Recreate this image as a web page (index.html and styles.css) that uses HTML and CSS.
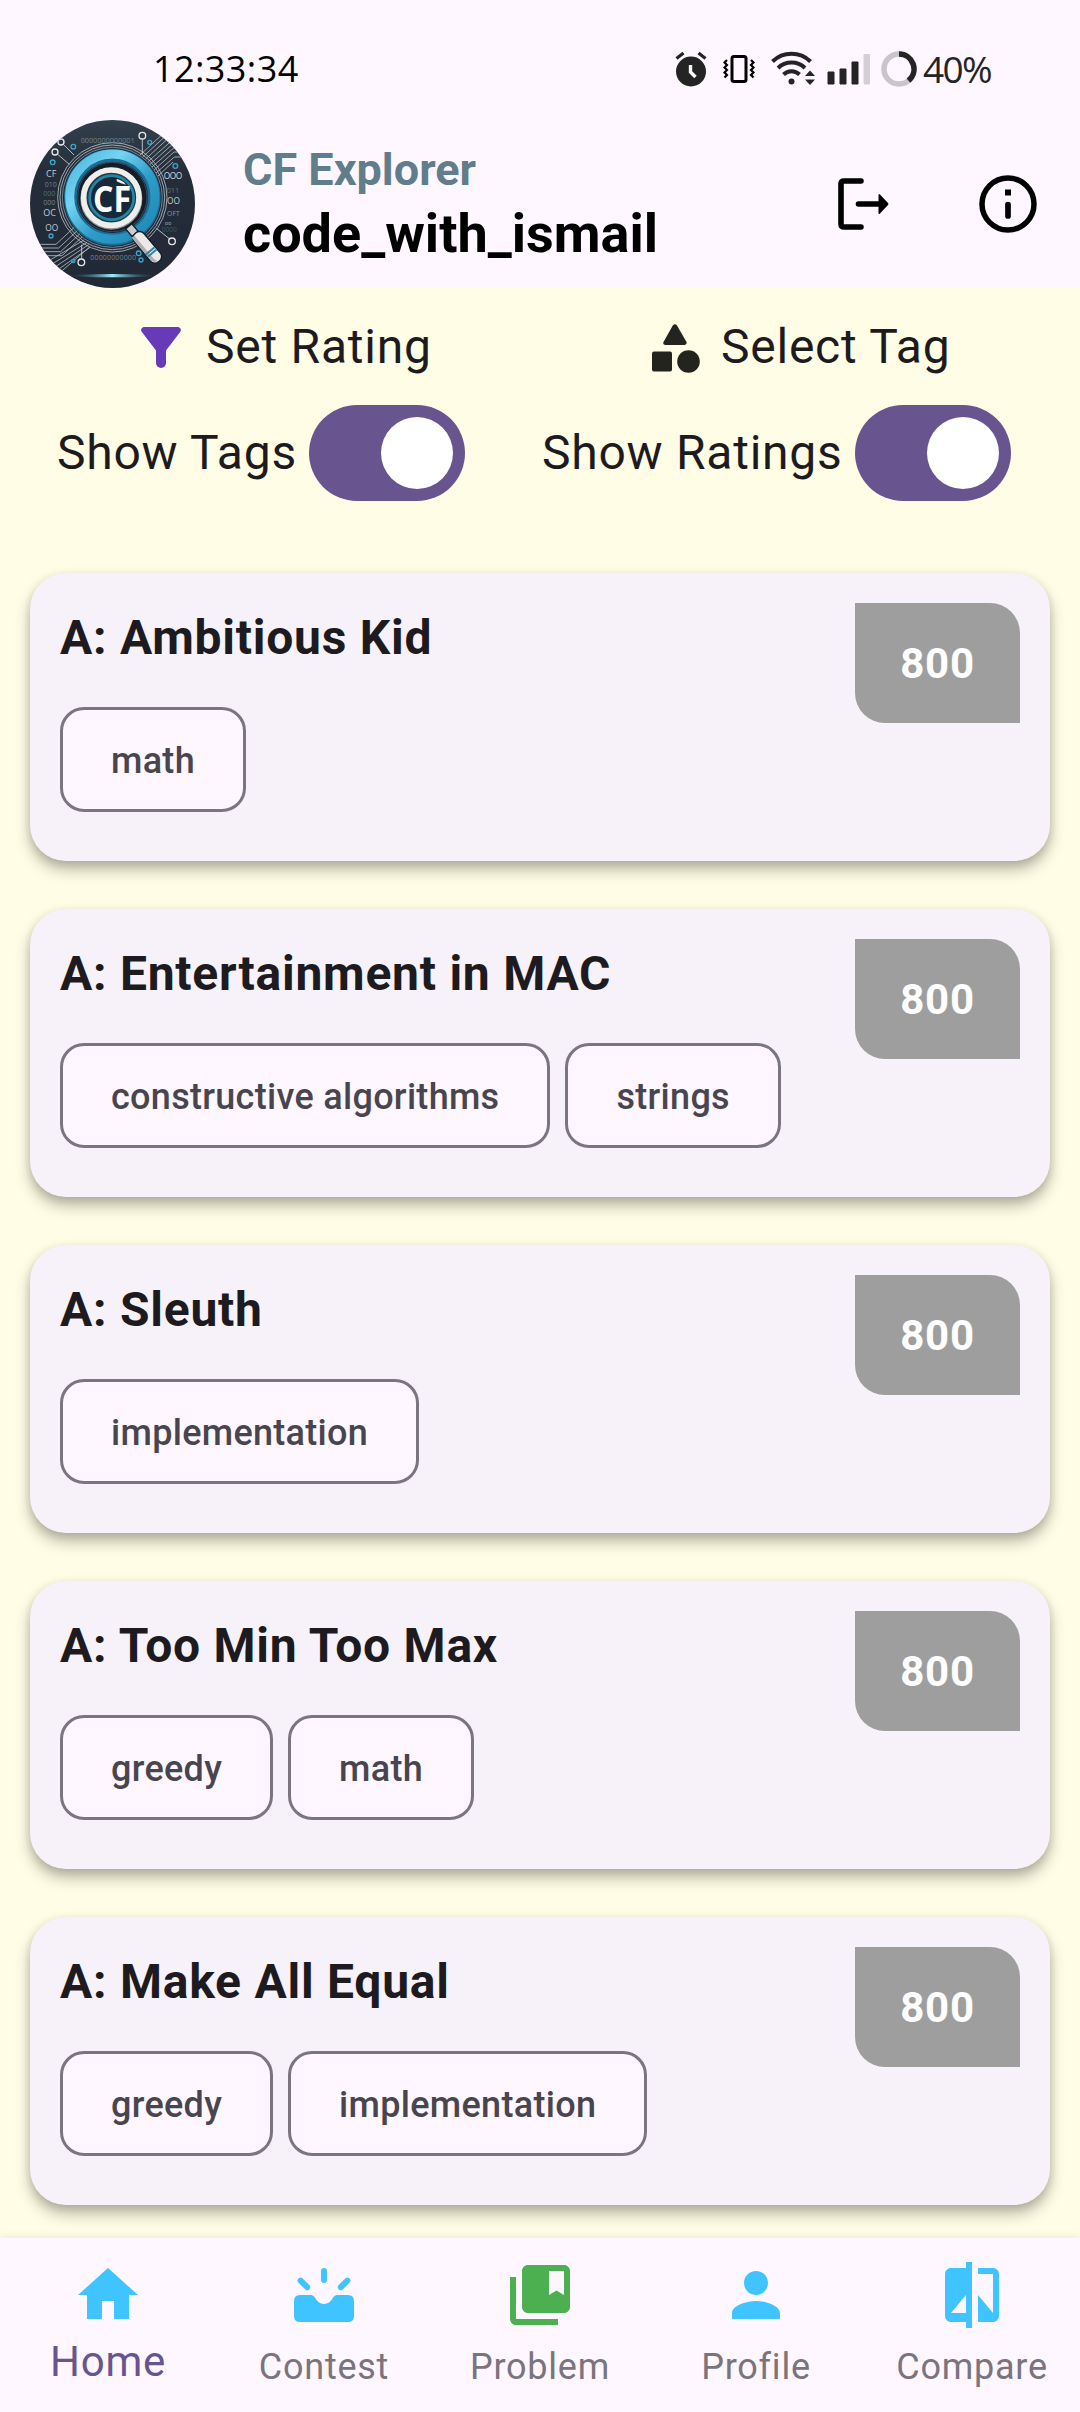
FILE: index.html
```html
<!DOCTYPE html>
<html lang="en">
<head>
<meta charset="utf-8">
<title>CF Explorer</title>
<link rel="stylesheet" href="styles.css">
</head>
<body>
<header class="top">
  <div class="status">
    <span class="clock">12:33:34</span>
    <svg class="alarm" width="32" height="36" viewBox="0 0 32 36"><circle cx="16" cy="20.500" r="15" fill="#242424"/><path d="M1.500 7.500 8.500 2M30.500 7.500 23.500 2" stroke="#242424" stroke-width="3.200"/><path d="M15.500 14v7l5 5" fill="none" stroke="#fef7ff" stroke-width="3.400"/></svg>
    <svg class="vibrate" width="32" height="30" viewBox="0 0 32 30"><rect x="9" y="2.500" width="14" height="25" rx="2" fill="none" stroke="#000" stroke-width="3"/><path d="M4 6 1.500 8.500 4 11 1.500 13.500 4 16 1.500 18.500 4 21 1.500 23.500M28 6l2.500 2.500L28 11l2.500 2.500L28 16l2.500 2.500L28 21l2.500 2.500" fill="none" stroke="#000" stroke-width="2.200"/></svg>
    <svg class="wifi" width="44" height="36" viewBox="0 0 44 36"><g fill="none" stroke="#242424" stroke-width="4"><path d="M1.500 11.500a27 27 0 0 1 38 0"/><path d="M7 18a19.500 19.500 0 0 1 27 0"/><path d="M12.500 24.500a11.500 11.500 0 0 1 16 0"/></g><circle cx="20.500" cy="31.500" r="3" fill="#242424"/><path d="M34 26l5-5.500 5 5.500zM34 29.500l5 5.500 5-5.500z" fill="#242424"/></svg>
    <svg class="signal" width="44" height="32" viewBox="0 0 44 32"><path d="M1 19h6v12H1zM13 16h6v15h-6zM25 9h6v22h-6z" fill="#242424" stroke="#242424" stroke-linejoin="round"/><rect x="36.500" y="1" width="6.500" height="30.500" rx="1" fill="#d4ced6"/></svg>
    <svg class="battery" width="36" height="36" viewBox="0 0 36 36"><circle cx="18" cy="18" r="15" fill="none" stroke="#cac4cd" stroke-width="5.500"/><path d="M18 3a15 15 0 0 1 9.500 26.600" fill="none" stroke="#242424" stroke-width="5.500"/></svg>
    <span class="percent">40%</span>
  </div>
  <div class="appbar">
    <svg class="avatar" viewBox="30 30 495 504" preserveAspectRatio="none">
      <defs>
        <clipPath id="disc"><ellipse cx="277.500" cy="282" rx="247.500" ry="252"/></clipPath>
        <linearGradient id="ring" x1="0" y1="0" x2="1" y2="1"><stop offset="0" stop-color="#4bb4da"/><stop offset=".3" stop-color="#74d4f2"/><stop offset=".6" stop-color="#2d9cc9"/><stop offset="1" stop-color="#1f86b4"/></linearGradient>
        <linearGradient id="beam"><stop offset="0" stop-color="#1f5a78" stop-opacity="0"/><stop offset=".5" stop-color="#9beeff"/><stop offset="1" stop-color="#1f5a78" stop-opacity="0"/></linearGradient>
        <linearGradient id="night" x1="0" y1="0" x2="0" y2="1"><stop offset="0" stop-color="#33414d"/><stop offset=".3" stop-color="#252d3a"/><stop offset="1" stop-color="#222936"/></linearGradient>
      </defs>
      <g clip-path="url(#disc)">
        <rect x="30" y="30" width="495" height="504" fill="url(#night)"/>
        <g fill="none" stroke="#b4bec5" stroke-width="2.500">
          <path d="M360 135l65-60M368 141l72-66M376 148l72-66M384 155l70-62 12 0M390 163l64-57h30M396 171l64-56h30M402 180l60-54h35M408 189l55-48h40M414 198l45-42"/>
          <path d="M50 403h58l60-56M50 414h66l56-52M50 425h72l58-54M60 437h66l60-56M80 456l112-66M90 466l110-68M100 474l106-70M112 480l98-68M124 484l84-72"/>
          <path d="M367 88v44M130 103l32 32M113 133l35 30M185 446v-42M449 387l-40-32" stroke="#d2dade"/>
          <circle cx="277" cy="262" r="157"/><circle cx="277" cy="262" r="164"/><circle cx="277" cy="262" r="150" stroke="#8294a0"/>
          <g stroke="#e3e8eb" stroke-width="4"><circle cx="367" cy="77" r="10"/><circle cx="123" cy="96" r="9"/><circle cx="105" cy="126" r="9"/><circle cx="184" cy="457" r="10"/><circle cx="456" cy="394" r="10"/></g>
          <g stroke="#3aa6cf" stroke-width="4"><circle cx="160" cy="110" r="7"/><circle cx="98" cy="157" r="7"/><circle cx="389" cy="97" r="6"/><circle cx="466" cy="168" r="7"/><circle cx="93" cy="378" r="6"/><circle cx="356" cy="430" r="7"/><circle cx="363" cy="450" r="6"/><circle cx="160" cy="453" r="5"/></g>
        </g>
        <g class="bits">
          <text x="182" y="98" font-size="22" textLength="162" fill="#71828d">0000000000001</text>
          <text x="78" y="202" font-size="27" fill="#c4ccd0">CF</text>
          <text x="74" y="231" font-size="21" fill="#73828c">010</text>
          <text x="70" y="257" font-size="21" fill="#496f87">000</text>
          <text x="70" y="284" font-size="21" fill="#73828c">000</text>
          <text x="70" y="319" font-size="27" fill="#c4ccd0">OC</text>
          <text x="76" y="364" font-size="25" fill="#c4ccd0">OO</text>
          <text x="431" y="206" font-size="25" textLength="56" fill="#d4dadd">OOO</text>
          <text x="440" y="248" font-size="22" fill="#687179">011</text>
          <text x="441" y="283" font-size="25" fill="#c4ccd0">OO</text>
          <text x="441" y="318" font-size="21" fill="#3aa6cf">OFT</text>
          <text x="434" y="344" font-size="17" fill="#a4afb6">oo</text>
          <text x="425" y="367" font-size="20" fill="#36586e">0000</text>
          <text x="211" y="451" font-size="21" textLength="137" fill="#71828d">00000000000</text>
        </g>
        <circle cx="277" cy="262" r="146" fill="#182431"/>
        <circle cx="277" cy="262" r="126" fill="none" stroke="#1c6d93" stroke-width="38"/>
        <circle cx="277" cy="260" r="128" fill="none" stroke="url(#ring)" stroke-width="27"/>
        <circle cx="277" cy="261" r="104" fill="#151d2b" stroke="#496273" stroke-width="2"/>
        <circle cx="274" cy="266" r="83" fill="none" stroke="#8c9296" stroke-width="20"/>
        <circle cx="274" cy="263" r="83" fill="#1d3b4e" stroke="#eeeeea" stroke-width="17"/>
        <circle cx="275" cy="263" r="66" fill="#182a3a" stroke="#2585a5" stroke-width="8"/>
        <path d="M290 207q18 3 28 17-16-3-28-10z" fill="#e4f4fb"/>
        <text class="mono" x="219" y="306" textLength="114" lengthAdjust="spacingAndGlyphs">CF</text>
        <g transform="translate(331 350) rotate(50)"><path d="M-4-9h30v24H-4z" fill="#c9cdcf" stroke="#151d2b" stroke-width="4"/><rect x="25" y="-18" width="110" height="38" rx="17" fill="#eceae7" stroke="#151d2b" stroke-width="4"/><path d="M28 8h88q12 0 16-7-2 17-18 17H28z" fill="#aeb1b1"/><path d="M94-16v34M103-16v34" stroke="#2b86b0" stroke-width="6"/></g>
        <ellipse cx="277" cy="497" rx="130" ry="5" fill="url(#beam)"/>
      </g>
    </svg>
    <div class="names">
      <div class="app-name">CF Explorer</div>
      <div class="user">code_with_ismail</div>
    </div>
    <svg class="logout" width="51" height="52" viewBox="0 0 51 52"><path d="M23 3H6Q3 3 3 6V46q0 3 3 3H23M20.500 26H42" fill="none" stroke="#000" stroke-width="5.600" stroke-linecap="round"/><path d="M40.500 16.500q.5-1 1.500 0L50 25q1 1 0 2l-8 8.500q-1 1-1.500 0z"/></svg>
    <svg class="info" width="58" height="58" viewBox="0 0 58 58"><circle cx="29" cy="29" r="26" fill="none" stroke="#000" stroke-width="5.500"/><path d="M26 14.500h6V20.500h-6z"/><path d="M29 29.500v11.500" stroke="#000" stroke-width="5.700" stroke-linecap="round"/></svg>
  </div>
</header>

<section class="filters">
  <div class="filter-row">
    <button class="pick rating"><svg width="40" height="41" viewBox="0 0 40 41"><path d="M2.500 0h35q3.500 1.500 2 4.500L25 23.500V36a5 5 0 0 1-10 0V23.500L.5 4.500Q-1 1.500 2.500 0z" fill="#673ab7"/></svg>Set Rating</button>
    <button class="pick tag"><svg width="48" height="49" viewBox="0 0 48 49"><g fill="#23241e"><path d="M20.800 1.500q2.200-2.500 4.200 0L34.500 18q.8 2.500-2 3h-19q-3-.5-2-3z"/><rect y="27.500" width="20" height="20" rx="2"/><circle cx="36.500" cy="37.500" r="11.300"/></g></svg>Select Tag</button>
  </div>
  <div class="filter-row">
    <label class="toggle show-tags">Show Tags<span class="switch"><span class="thumb"></span></span></label>
    <label class="toggle show-ratings">Show Ratings<span class="switch"><span class="thumb"></span></span></label>
  </div>
</section>

<main class="list">
  <article class="card"><div class="body"><h2>A: Ambitious Kid</h2><div class="chips"><span class="chip">math</span></div></div><span class="badge">800</span></article>
  <article class="card"><div class="body"><h2>A: Entertainment in MAC</h2><div class="chips"><span class="chip">constructive algorithms</span><span class="chip">strings</span></div></div><span class="badge">800</span></article>
  <article class="card"><div class="body"><h2>A: Sleuth</h2><div class="chips"><span class="chip">implementation</span></div></div><span class="badge">800</span></article>
  <article class="card"><div class="body"><h2>A: Too Min Too Max</h2><div class="chips"><span class="chip">greedy</span><span class="chip">math</span></div></div><span class="badge">800</span></article>
  <article class="card"><div class="body"><h2>A: Make All Equal</h2><div class="chips"><span class="chip">greedy</span><span class="chip">implementation</span></div></div><span class="badge">800</span></article>
</main>

<nav class="tabs">
  <a class="tab active"><svg viewBox="0 0 24 24"><path d="M10 20v-6h4v6h5v-8h3L12 3 2 12h3v8z"/></svg>Home</a>
  <a class="tab"><svg viewBox="0 0 24 24"><path d="M4 12h3.500c.8 0 1.300.4 1.700 1.200C9.800 14.400 10.700 15 12 15s2.200-.6 2.800-1.800c.4-.8.9-1.200 1.700-1.200H20q2 0 2 2v5q0 2-2 2H4q-2 0-2-2v-5q0-2 2-2z"/><path d="M12 4v3M4.200 7.200l2.200 2.200M19.800 7.200l-2.200 2.200" stroke="#40c4ff" stroke-width="2" stroke-linecap="round"/></svg>Contest</a>
  <a class="tab"><svg class="green" viewBox="0 0 24 24"><path d="M4 6H2v14c0 1.100.9 2 2 2h14v-2H4V6z"/><path d="M20 2H8c-1.100 0-2 .9-2 2v12c0 1.100.9 2 2 2h12c1.100 0 2-.9 2-2V4c0-1.100-.9-2-2-2zm0 10l-2.500-1.500L15 12V4h5v8z"/></svg>Problem</a>
  <a class="tab"><svg viewBox="0 0 24 24"><path d="M12 12c2.210 0 4-1.790 4-4s-1.790-4-4-4-4 1.790-4 4 1.790 4 4 4zm0 2c-2.670 0-8 1.340-8 4v2h16v-2c0-2.660-5.330-4-8-4z"/></svg>Profile</a>
  <a class="tab"><svg viewBox="0 0 24 24"><path d="M10 3H5c-1.100 0-2 .9-2 2v14c0 1.100.9 2 2 2h5v2h2V1h-2v2zm0 15H5l5-6v6zm9-15h-5v2h5v13l-5-6v9h5c1.100 0 2-.9 2-2V5c0-1.100-.9-2-2-2z"/></svg>Compare</a>
</nav>
</body>
</html>
```
FILE: styles.css
```css
* { box-sizing: border-box; }
body {
  margin: 0;
  width: 1080px;
  height: 2412px;
  display: flex;
  flex-direction: column;
  overflow: hidden;
  background: #fffde5;
  color: #1d1b20;
  font-family: Roboto, "Liberation Sans", sans-serif;
}
svg { display: block; flex: none; }

.top { height: 288px; flex: none; background: #fef7ff; }
.status {
  height: 120px;
  display: flex;
  align-items: center;
  padding: 18px 0 0 153px;
  font-family: "Open Sans", "Noto Sans", sans-serif;
  font-size: 36px;
  font-weight: 500;
  line-height: 50px;
  color: #242424;
}
.clock { width: 522px; color: #000; letter-spacing: 0.400px; }
.vibrate { margin-left: 16px; }
.wifi { margin-left: 16px; margin-top: -2px; }
.signal { margin-left: 12px; }
.battery { margin-left: 10px; }
.percent { margin-left: 6px; font-size: 37px; letter-spacing: -1.700px; }

.appbar { height: 168px; display: flex; align-items: center; padding-left: 30px; }
.avatar { width: 165px; height: 168px; }
.bits { font-family: "Open Sans", sans-serif; }
.mono { font: 700 105px "Open Sans", sans-serif; fill: #fff; }
.names { width: 595px; padding-left: 48px; font-weight: 700; }
.app-name { font-size: 45px; line-height: 53px; color: #607d8b; }
.user { margin-top: 6px; font-size: 54px; line-height: 63px; color: #000; }
.logout { margin-left: 48px; }
.info { margin-left: 90px; }

.filters { height: 285px; flex: none; font-size: 48px; letter-spacing: 0.750px; line-height: 56px; }
.filter-row { display: flex; align-items: center; }
.pick {
  display: flex;
  align-items: center;
  padding: 0;
  border: 0;
  background: none;
  color: inherit;
  font: inherit;
  letter-spacing: inherit;
}
.filter-row:first-child { height: 117px; }
.rating { width: 511px; margin-left: 141px; gap: 25px; }
.rating svg { margin-top: 1px; }
.tag svg { margin-top: 3px; }
.tag { gap: 21px; }
.toggle { display: flex; align-items: center; justify-content: space-between; white-space: nowrap; }
.show-tags { width: 408px; margin-left: 57px; }
.show-ratings { width: 469px; margin-left: 77px; }
.switch {
  width: 156px;
  height: 96px;
  padding: 12px;
  border-radius: 48px;
  background: #68548e;
  display: flex;
  justify-content: flex-end;
}
.thumb { width: 72px; height: 72px; border-radius: 50%; background: #fff; }

.list { flex: 1; display: flex; flex-direction: column; gap: 48px; padding: 0 30px; }
.card {
  height: 288px;
  flex: none;
  display: flex;
  align-items: flex-start;
  justify-content: space-between;
  padding: 30px;
  border-radius: 36px;
  background: #f7f2fa;
  box-shadow: 0 9px 15px rgba(0, 0, 0, 0.26), 0 3px 9px rgba(0, 0, 0, 0.12);
}
h2 { margin: 7px 0 0; font-size: 48px; line-height: 56px; font-weight: 700; letter-spacing: 0.750px; }
.chips { display: flex; gap: 15px; margin-top: 41px; }
.chip {
  height: 105px;
  display: flex;
  align-items: center;
  padding: 2px 48px 0;
  border: 3px solid #7a757f;
  border-radius: 24px;
  background: #fef7ff;
  color: #49454f;
  font-size: 36px;
  font-weight: 500;
  letter-spacing: 0.300px;
}
.badge {
  width: 165px;
  height: 120px;
  display: flex;
  align-items: center;
  justify-content: center;
  border-radius: 0 30px 0 30px;
  background: #9e9e9e;
  color: #fff;
  font-size: 42px;
  font-weight: 700;
  letter-spacing: 0.750px;
}

.tabs {
  height: 174px;
  flex: none;
  position: relative;
  display: flex;
  background: #fef7ff;
  box-shadow: 0 0 9px rgba(0, 0, 0, 0.1);
}
.tab {
  flex: 1;
  display: flex;
  flex-direction: column;
  align-items: center;
  padding-top: 21px;
  color: #79747e;
  font-size: 36px;
  line-height: 42px;
  letter-spacing: 0.750px;
  gap: 15px;
}
.tab svg { width: 72px; height: 72px; fill: #40c4ff; }
.tab svg.green { fill: #4caf50; }
.tab.active { color: #68548e; font-size: 42px; line-height: 50px; gap: 6px; }
```
